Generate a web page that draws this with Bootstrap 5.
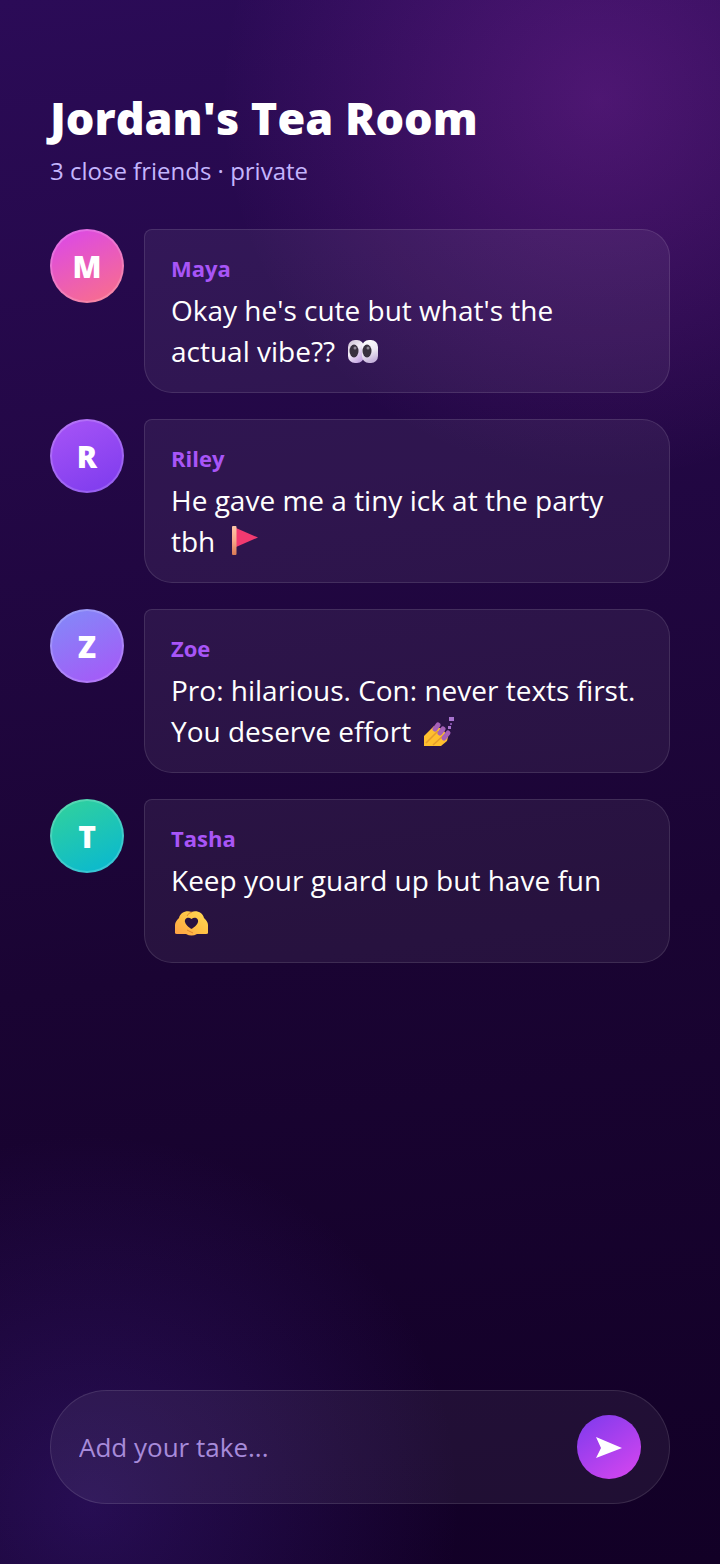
<!DOCTYPE html>
<html lang="en">
<head>
<meta charset="utf-8">
<meta name="viewport" content="width=device-width, initial-scale=1">
<title>Jordan's Tea Room</title>
<link rel="stylesheet" href="https://cdn.jsdelivr.net/npm/bootstrap@5.3.0/dist/css/bootstrap.min.css">
<style>
  body {
    color: #fff;
    font-family: "Segoe UI", "Open Sans", sans-serif;
    background:
      radial-gradient(circle at 600px 100px, rgba(217, 70, 239, .21), transparent 380px),
      radial-gradient(circle at 90px calc(100% - 60px), rgba(110, 60, 240, .21), transparent 370px),
      linear-gradient(172deg, #2b0b57 0%, #1a0433 60%, #120026 100%);
  }
  .room { padding: 92px 50px 60px; }
  .room-title { font-size: 45px; font-weight: 800; line-height: 52px; }
  .room-info { font-size: 24px; line-height: 34px; color: #c4b5fd; margin: 10px 0 41px; }
  .thread { gap: 26px; }
  .post { gap: 20px; }
  .avatar { width: 74px; height: 74px; border: 2px solid rgba(255, 255, 255, .18); font-size: 30px; font-weight: 800; }
  .avatar-maya { background: linear-gradient(155deg, #d946ef, #fb7185) border-box; }
  .avatar-riley { background: linear-gradient(155deg, #a855f7, #7c3aed) border-box; }
  .avatar-zoe { background: linear-gradient(155deg, #818cf8, #a855f7) border-box; }
  .avatar-tasha { background: linear-gradient(155deg, #34d399, #06b6d4) border-box; }
  .bubble { padding: 20px 26px; border: 1px solid rgba(255, 255, 255, .11); border-radius: 8px 28px 28px 28px; background: rgba(255, 255, 255, .06); }
  .author { font-size: 22px; line-height: 36px; margin-bottom: 4px; color: #a855f7; }
  .message { font-size: 28px; line-height: 41px; }
  .emoji { width: 38px; height: 38px; margin-left: 2px; vertical-align: -8px; }
  .composer { height: 114px; padding: 0 28px; border: 1px solid rgba(255, 255, 255, .11); border-radius: 57px; background: rgba(255, 255, 255, .06); }
  .composer-input { min-width: 0; border: 0; outline: 0; background: transparent; color: #fff; font-size: 26px; line-height: 36px; }
  .composer-input::placeholder { color: #a78bda; opacity: 1; }
  .send { width: 64px; height: 64px; background: linear-gradient(145deg, #7c3aed, #d946ef); }
</style>
</head>
<body>
<main class="room min-vh-100 d-flex flex-column">
  <header>
    <h1 class="room-title m-0">Jordan's Tea Room</h1>
    <p class="room-info">3 close friends · private</p>
  </header>

  <section class="thread d-flex flex-column mb-4" aria-label="Messages">
    <article class="post d-flex align-items-start">
      <div class="avatar avatar-maya rounded-circle flex-shrink-0 d-flex align-items-center justify-content-center">M</div>
      <div class="bubble flex-grow-1">
        <div class="author fw-bold">Maya</div>
        <p class="message m-0">Okay he's cute but what's the<br>actual vibe?? <svg class="emoji" viewBox="0 0 38 38" role="img" aria-label="eyes">
          <defs><linearGradient id="eye" x2="0.6" y2="1"><stop offset="0" stop-color="#c9bcd0"/><stop offset=".5" stop-color="#f3eef7"/><stop offset="1" stop-color="#c8a9e4"/></linearGradient>
          <linearGradient id="eyeRight" x2="0.3" y2="1"><stop offset="0" stop-color="#fff"/><stop offset=".6" stop-color="#eee9f3"/><stop offset="1" stop-color="#c8b5dd"/></linearGradient></defs>
          <rect x="4" y="8" width="16" height="23" rx="7" fill="url(#eye)"/>
          <rect x="18" y="8" width="16" height="23" rx="7" fill="url(#eyeRight)"/>
          <ellipse cx="10" cy="19" rx="4.500" ry="6.500" fill="#39323f"/><ellipse cx="23" cy="19" rx="4.500" ry="6.500" fill="#39323f"/>
          <circle cx="11" cy="16" r="1.500" fill="#8e8794"/><circle cx="24" cy="16" r="1.500" fill="#8e8794"/>
        </svg></p>
      </div>
    </article>

    <article class="post d-flex align-items-start">
      <div class="avatar avatar-riley rounded-circle flex-shrink-0 d-flex align-items-center justify-content-center">R</div>
      <div class="bubble flex-grow-1">
        <div class="author fw-bold">Riley</div>
        <p class="message m-0">He gave me a tiny ick at the party tbh <svg class="emoji" viewBox="0 0 38 38" role="img" aria-label="red flag">
          <defs><linearGradient id="pole" x2="0" y2="1"><stop offset="0" stop-color="#ffc6a8"/><stop offset=".5" stop-color="#f7a98a"/><stop offset="1" stop-color="#d97a55"/></linearGradient></defs>
          <path d="M11 6 33 15.500 11 25z" fill="#f23a70"/>
          <rect x="7" y="4" width="4.500" height="29" rx="1" fill="url(#pole)"/>
        </svg></p>
      </div>
    </article>

    <article class="post d-flex align-items-start">
      <div class="avatar avatar-zoe rounded-circle flex-shrink-0 d-flex align-items-center justify-content-center">Z</div>
      <div class="bubble flex-grow-1">
        <div class="author fw-bold">Zoe</div>
        <p class="message m-0">Pro: hilarious. Con: never texts first. You deserve effort <svg class="emoji" viewBox="0 0 38 38" role="img" aria-label="nail polish">
          <path d="M4 34V24L14 14 20 16 24 19 28 25 27 29 21 34z" fill="#ffbf2e"/>
          <path d="M6 31 18 19M13 33 24 23" stroke="#e59a2b" stroke-width="1.500" fill="none"/>
          <g stroke="#a660b8" stroke-width="5" stroke-linecap="round"><path d="M15 17 18 13"/><path d="M20 21 23 17"/><path d="M24 26 28 21"/></g>
          <path d="M29 5h5v4h-5zM28 14h3v3h-3z" fill="#a873cf"/><path d="M30 11h2v2h-2z" fill="#7f50a5"/>
        </svg></p>
      </div>
    </article>

    <article class="post d-flex align-items-start">
      <div class="avatar avatar-tasha rounded-circle flex-shrink-0 d-flex align-items-center justify-content-center">T</div>
      <div class="bubble flex-grow-1">
        <div class="author fw-bold">Tasha</div>
        <p class="message m-0">Keep your guard up but have fun <svg class="emoji" viewBox="2 0 38 38" role="img" aria-label="heart hands">
          <defs><linearGradient id="hands" x1="0" x2="1" y1="1" y2="0"><stop offset="0" stop-color="#ff9f45"/><stop offset=".5" stop-color="#ffc145"/><stop offset="1" stop-color="#ffdc55"/></linearGradient></defs>
          <path fill="url(#hands)" fill-rule="evenodd" d="M4 31V23C4 20 6 18 8 16 9 11 15 8 20.500 10 26 8 32 11 33 16 35 18 37 20 37 23V31Q37 32 35 32H26Q20.500 35 15 32H6Q4 32 4 31zM20.500 17C17 14 13 17 14 20 15 24 20.500 27 20.500 27S26 24 27 20C28 17 24 14 20.500 17z"/>
          <path d="M21 10Q17 11 16 14M16 28l6 3" stroke="#df8630" fill="none"/>
        </svg></p>
      </div>
    </article>
  </section>

  <form class="composer d-flex align-items-center gap-3 mt-auto" onsubmit="return false">
    <input class="composer-input flex-grow-1 p-0" type="text" placeholder="Add your take..." aria-label="Add your take">
    <button class="send btn border-0 rounded-circle p-0 flex-shrink-0 d-flex align-items-center justify-content-center" type="submit" aria-label="Send">
      <svg width="28" height="24" viewBox="0 0 28 24" aria-hidden="true"><path d="M1 2 27 13 1 23 6 13z" fill="#fff"/></svg>
    </button>
  </form>
</main>
<script src="https://cdn.jsdelivr.net/npm/bootstrap@5.3.0/dist/js/bootstrap.bundle.min.js"></script>
</body>
</html>
